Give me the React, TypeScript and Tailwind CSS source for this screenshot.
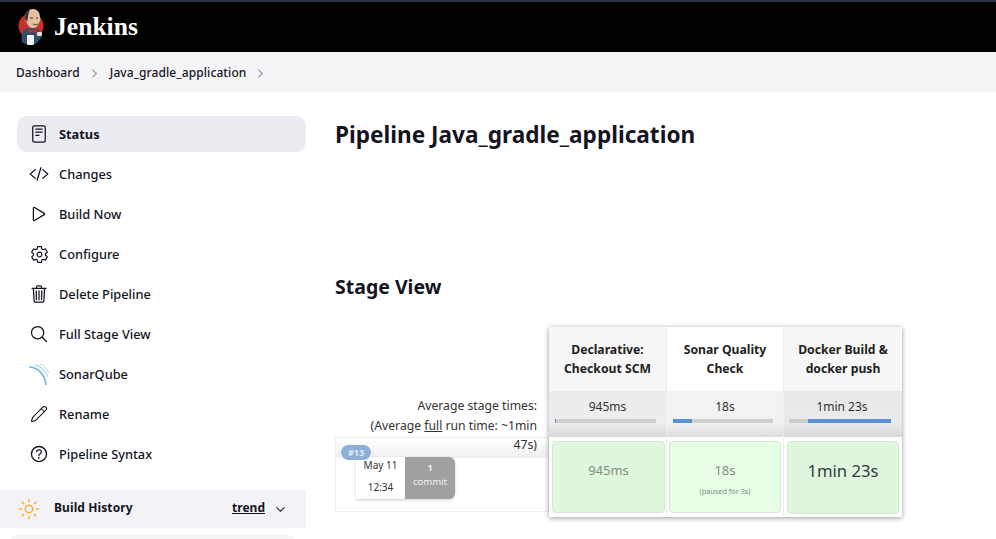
import React from 'react'
import {
  IoReaderOutline,
  IoCodeSlashOutline,
  IoPlayOutline,
  IoSettingsOutline,
  IoTrashOutline,
  IoSearchOutline,
  IoHelpCircleOutline,
  IoSunnyOutline,
  IoChevronDownOutline,
  IoChevronForwardOutline,
} from 'react-icons/io5'
import { Pencil } from 'lucide-react'

const JenkinsLogo = () => (
  <svg width="30" height="38" viewBox="0 0 30 38" className="shrink-0">
    <circle cx="14" cy="18" r="12.5" fill="#c8302c" />
    <path d="M5 34c-1-6 0-12 5-14l10 1c4 2 5 6 4 9l-5 6H8z" fill="#2f5168" />
    <path d="M8 9c0-5 4-8 8-8s7 3 7 8c1 2 0 4-1 6-1 3-3 5-6 5-3 0-5-2-6-5-1 0-2-4-2-6z" fill="#e3bfa3" />
    <path d="M8 9c0-4 2-7 5-8-1 3-2 6-2 9l-1 4c-1-1-2-3-2-5z" fill="#3a3230" />
    <path d="M13 10h3M19 10h2M16 16c2 1 3 1 5 0" stroke="#4b2f22" strokeWidth="1" fill="none" />
    <path d="M12 21l4 2 4-2v4l-4-1-4 1z" fill="#d1242a" />
    <rect x="10" y="27" width="7" height="10" rx="1" fill="#f4f4f4" />
    <rect x="20" y="24" width="5" height="4" rx="1" fill="#e8ddd2" />
  </svg>
)

const SonarIcon = () => (
  <svg width="22" height="22" viewBox="0 0 22 22" fill="none" className="shrink-0">
    <path d="M1 4c8 0 16 7 17 18" stroke="#6db4e6" strokeWidth="1.6" />
    <path d="M7 2c6 1.500 11 6 13 12" stroke="#8fc6ec" strokeWidth="1" />
    <path d="M12 1c3.500 1.500 7 5 9 9" stroke="#a9d4f2" strokeWidth="0.9" />
  </svg>
)

const navItems = [
  { label: 'Status', icon: <IoReaderOutline size={20} />, active: true },
  { label: 'Changes', icon: <IoCodeSlashOutline size={20} /> },
  { label: 'Build Now', icon: <IoPlayOutline size={20} /> },
  { label: 'Configure', icon: <IoSettingsOutline size={19} /> },
  { label: 'Delete Pipeline', icon: <IoTrashOutline size={20} /> },
  { label: 'Full Stage View', icon: <IoSearchOutline size={20} /> },
  { label: 'SonarQube', icon: <SonarIcon /> },
  { label: 'Rename', icon: <Pencil size={18} strokeWidth={1.4} /> },
  { label: 'Pipeline Syntax', icon: <IoHelpCircleOutline size={22} /> },
]

const stages = [
  {
    title: ['Declarative:', 'Checkout SCM'],
    avg: '945ms',
    head: 'bg-[#f7f7f7]',
    avgBg: 'from-[#ececec] via-[#eeeeee] to-[#d8d8d8] pl-[6px] pr-[10px]',
    fillClass: 'ml-0 w-px',
    body: 'pl-[3px] pr-px',
    cell: 'h-[72px] bg-[#dff7dd]',
    timeClass: 'pt-[18px] text-[13px] text-[#858c85]',
  },
  {
    title: ['Sonar Quality', 'Check'],
    avg: '18s',
    head: 'bg-white',
    avgBg: 'from-[#f2f2f2] via-[#f2f2f2] to-[#dcdcdc] pl-[6px] pr-[10px]',
    fillClass: 'ml-0 w-[19px]',
    body: 'pl-[2px] pr-[2px]',
    cell: 'h-[72px] bg-[#e6fee4]',
    timeClass: 'pt-[18px] text-[13px] text-[#858c85]',
    note: '(paused for 3s)',
  },
  {
    title: ['Docker Build &', 'docker push'],
    avg: '1min 23s',
    head: 'bg-[#f7f7f7]',
    avgBg: 'from-[#e8e8e8] via-[#eaeaea] to-[#d6d6d6] pl-[5px] pr-[11px]',
    fillClass: 'ml-[19px] w-[83px]',
    body: 'pl-[3px] pr-[3px]',
    cell: 'h-[73px] bg-[#dff7dd]',
    timeClass: 'pt-[19px] text-[16.700px] text-[#333b40]',
  },
]

export default function App() {
  return (
    <div className="flex h-[539px] flex-col overflow-hidden bg-white font-['Noto_Sans',sans-serif] text-[#14141f]">
      <header className="flex h-[52px] shrink-0 items-center gap-[7px] border-t-2 border-[#2c3240] bg-black pl-[17px]">
        <JenkinsLogo />
        <span className="font-['Liberation_Serif',serif] text-[25.600px] font-bold text-white">Jenkins</span>
      </header>

      <nav className="flex h-10 shrink-0 items-center bg-[#f5f5f8] pl-4 pt-[2px] text-[12px] font-medium tracking-[0.1px]">
        <span>Dashboard</span>
        <IoChevronForwardOutline size={13} className="mx-[8.500px] text-[#9a9aa8]" />
        <span>Java_gradle_application</span>
        <IoChevronForwardOutline size={13} className="ml-2 text-[#9a9aa8]" />
      </nav>

      <div className="flex flex-1">
        <aside className="w-[306px] shrink-0 pt-6">
          <div className="flex flex-col gap-1 pl-[17px]">
            {navItems.map((item) => (
              <div
                key={item.label}
                className={`flex h-9 items-center gap-[9px] rounded-[10px] pl-[11px] text-[12.800px] ${
                  item.active ? 'bg-[#ebebf2] font-bold' : 'font-medium'
                }`}
              >
                <span className="flex w-[22px] justify-center">{item.icon}</span>
                <span className="pt-[2px]">{item.label}</span>
              </div>
            ))}
          </div>
          <div className="mt-[18px] flex h-[38px] items-center bg-[#f2f2f7] pl-[17px] pr-[19px] text-[12px] font-bold">
            <IoSunnyOutline size={24} className="text-[#fbb03b]" />
            <span className="ml-[13px] pb-[2px] tracking-[0.1px]">Build History</span>
            <span className="ml-auto pb-[2px] underline">trend</span>
            <IoChevronDownOutline size={13} className="ml-[9px] text-[#33333f]" />
          </div>
          <div className="ml-2 mt-[7px] h-10 w-[290px] rounded-[10px] bg-[#f5f5f8]" />
        </aside>

        <main className="flex-1 pl-[29px]">
          <h1 className="mt-[27px] text-[22.600px] leading-8 font-bold">Pipeline Java_gradle_application</h1>
          <h2 className="mt-[122px] text-[19.500px] leading-7 font-bold">Stage View</h2>

          <div className="mt-[26px] flex">
            <div className="w-[214px] shrink-0">
              <div className="relative z-10 h-[110px] pl-[30px] pr-3 pt-[69px] text-right text-[12.200px] leading-[19.500px] text-[#333]">
                <div>Average stage times:</div>
                <div>
                  (Average <span className="underline">full</span> run time: ~1min 47s)
                </div>
              </div>
              <div className="relative h-[75px] border border-[#eeeeee]">
                <div className="h-5 bg-gradient-to-b from-white to-[#f0f0f0]" />
                <span className="absolute left-[5px] top-[7px] z-10 rounded-full bg-[#8cb0d8] px-[7px] text-[9px] leading-[15px] font-bold text-[#e8eef6]">
                  #13
                </span>
                <div className="ml-5 mt-[-1px] flex h-[42px] w-[99px] rounded-r-md text-center text-[10px] shadow-[0_1px_3px_rgba(0,0,0,0.2)]">
                  <div className="flex w-[49px] flex-col items-center gap-[7px] bg-white pt-[1px] leading-[15px] text-[#333]">
                    <div>May 11</div>
                    <div>12:34</div>
                  </div>
                  <div className="w-[50px] rounded-r-md bg-[#a0a0a0] pt-1 leading-[14px] text-[#f0f0f0]">
                    <div className="text-[9px] font-bold">1</div>
                    <div className="text-[9.500px]">commit</div>
                  </div>
                </div>
              </div>
            </div>

            <div className="relative z-20 grid h-[190px] w-[353px] grid-cols-[118px_117px_118px] shadow-[0_1px_5px_rgba(0,0,0,0.4)]">
              {stages.map((stage) => (
                <div key={stage.avg} className="flex flex-col border-r border-[#eeeeee] last:border-r-0">
                  <div
                    className={`flex h-16 flex-col items-center justify-center text-center text-[12.200px] leading-[19px] font-bold text-[#222] ${stage.head}`}
                  >
                    <div>{stage.title[0]}</div>
                    <div>{stage.title[1]}</div>
                  </div>
                  <div
                    className={`h-[46px] bg-gradient-to-b via-70% pt-[7px] text-center text-[12px] leading-[17px] text-[#333] ${stage.avgBg}`}
                  >
                    <div className="pl-[4px]">{stage.avg}</div>
                    <div className="mt-1 h-1 bg-[#cfcfcf]">
                      <div className={`h-1 bg-[#5b8fd6] ${stage.fillClass}`} />
                    </div>
                  </div>
                  <div className={`flex-1 pt-1 ${stage.body}`}>
                    <div className={`rounded border border-[#d9e6d6] text-center leading-5 ${stage.cell}`}>
                      <div className={stage.timeClass}>{stage.avg}</div>
                      {stage.note && <div className="mt-[7px] text-[7.300px] leading-[9px] text-[#858c85]">{stage.note}</div>}
                    </div>
                  </div>
                </div>
              ))}
            </div>
          </div>

          <h2 className="mt-[17px] text-[19.500px] leading-7 font-bold">Permalinks</h2>
        </main>
      </div>
    </div>
  )
}
